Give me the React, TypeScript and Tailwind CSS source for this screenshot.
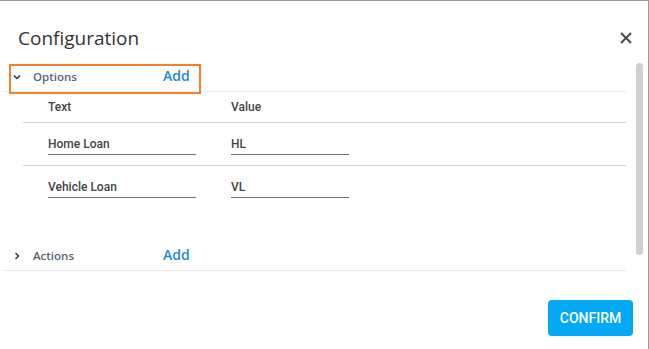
import React from 'react';

const openSans = { fontFamily: '"Open Sans", "Noto Sans", sans-serif' };
const roboto = { fontFamily: 'Roboto, "Liberation Sans", sans-serif' };

const ChevronDown = () => (
  <svg width="8" height="6" viewBox="0 0 8 6" fill="none">
    <path d="M1 1.5 L4 4.5 L7 1.5" stroke="#333" strokeWidth="1.4" />
  </svg>
);

const ChevronRight = () => (
  <svg width="8" height="8" viewBox="0 0 8 8" fill="none">
    <path d="M2.5 1 L5.5 4 L2.5 7" stroke="#333" strokeWidth="1.4" />
  </svg>
);

const SectionHeader = ({ label, open, focused }: { label: string; open: boolean; focused?: boolean }) => (
  <div className="relative h-[30px] border-b border-[#ebebeb] flex items-center pl-[10px]">
    <div className="w-[8px] mr-[12px] flex items-center justify-center">
      {open ? <ChevronDown /> : <ChevronRight />}
    </div>
    <span className="w-[130px] text-[11.5px] font-semibold text-[#5a6274]" style={openSans}>
      {label}
    </span>
    <span className="text-[14px] font-semibold text-[#1b8bd8] -mt-[2px]" style={openSans}>
      Add
    </span>
    {focused && (
      <div className="absolute left-[6px] top-[2px] w-[192px] h-[30px] border-2 border-[#f5822a] pointer-events-none" />
    )}
  </div>
);

const rows = [
  { text: 'Home Loan', value: 'HL' },
  { text: 'Vehicle Loan', value: 'VL' },
];

export default function App() {
  return (
    <div className="w-[649px] h-[349px] bg-white border-t border-[#9a9a9a] border-r border-[#3a3a3a] flex flex-col overflow-hidden">
      <div className="h-[61px] flex items-start justify-between pl-[18px] pr-[16px] pt-[23px]">
        <h1 className="text-[19px] leading-[28px] text-[#333]" style={openSans}>
          Configuration
        </h1>
        <button className="mt-[8px]" aria-label="close">
          <svg width="12" height="12" viewBox="0 0 12 12">
            <path d="M1 1 L11 11 M11 1 L1 11" stroke="#444" strokeWidth="1.8" />
          </svg>
        </button>
      </div>

      <div className="flex pl-[3px]">
        <div className="w-[623px]">
          <SectionHeader label="Options" open focused />

          <div className="ml-[20px]" style={roboto}>
            <div className="h-[31px] border-b border-[#d4d4d4] flex items-center pl-[25px] text-[12px] font-medium text-[#444]">
              <span className="w-[183px]">Text</span>
              <span>Value</span>
            </div>
            {rows.map((r, i) => (
              <div
                key={r.text}
                className={`h-[43px] pl-[25px] pt-[11px] flex items-start ${i === 0 ? 'border-b border-[#d4d4d4]' : ''}`}
              >
                <div className="w-[183px]">
                  <input
                    readOnly
                    value={r.text}
                    className="block w-[148px] h-[21px] border-b border-[#707070] text-[12px] font-medium text-[#444] outline-none"
                    style={roboto}
                  />
                </div>
                <input
                  readOnly
                  value={r.value}
                  className="block w-[118px] h-[21px] border-b border-[#707070] text-[12px] font-medium text-[#444] outline-none"
                  style={roboto}
                />
              </div>
            ))}
          </div>

          <div className="mt-[32px]">
            <SectionHeader label="Actions" open={false} />
          </div>
        </div>
        <div className="ml-[10px] mt-[1px] w-[7px] h-[192px] rounded-full bg-[#d0d0d0]" />
      </div>

      <div className="mt-auto flex justify-end pr-[15px] pb-[13px]">
        <button
          className="w-[85px] h-[36px] rounded-[4px] bg-[#03a9f4] text-white text-[14px] font-medium"
          style={roboto}
        >
          CONFIRM
        </button>
      </div>
    </div>
  );
}
